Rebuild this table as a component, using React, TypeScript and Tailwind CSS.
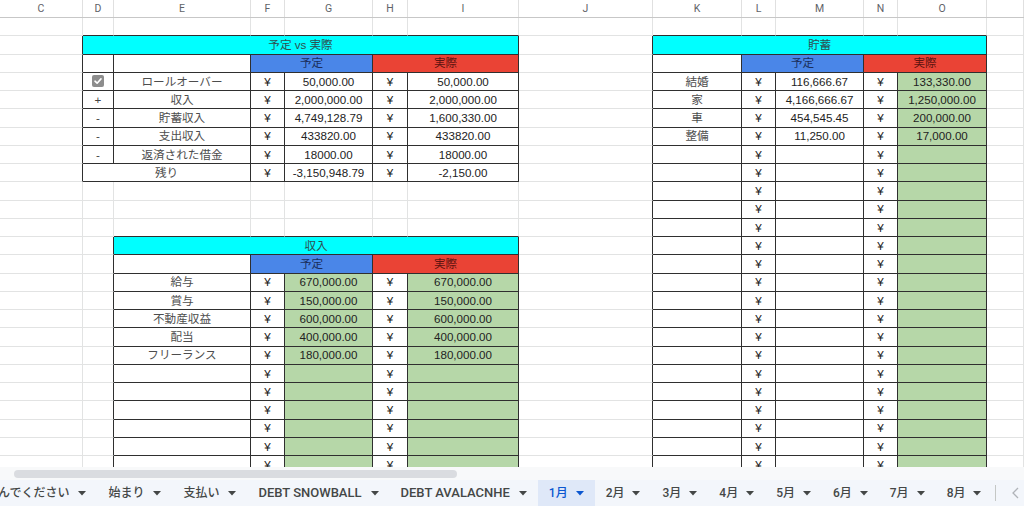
import React from "react";

type Kind = "cyan" | "blue" | "red" | "green" | "label" | "num" | "yen" | "sign" | "check" | "blank";
type Cell = { c: number; span?: number; text?: string; kind?: Kind; green?: boolean };

const COLS = ["C", "D", "E", "F", "G", "H", "I", "J", "K", "L", "M", "N", "O", ""];
const NROWS = 25;

const inT1 = (r: number, c: number) => r >= 2 && r <= 9 && c >= 1 && c <= 6;
const inT2 = (r: number, c: number) => r >= 2 && c >= 8 && c <= 12;
const inT3 = (r: number, c: number) => r >= 13 && c >= 2 && c <= 6;
const inT = (r: number, c: number) => inT1(r, c) || inT2(r, c) || inT3(r, c);

const t1Rows: [Kind, string, string, string, string][] = [
  ["check", "", "ロールオーバー", "50,000.00", "50,000.00"],
  ["sign", "+", "収入", "2,000,000.00", "2,000,000.00"],
  ["sign", "-", "貯蓄収入", "4,749,128.79", "1,600,330.00"],
  ["sign", "-", "支出収入", "433820.00", "433820.00"],
  ["sign", "-", "返済された借金", "18000.00", "18000.00"],
];

const t2Rows: [string, string, string][] = [
  ["結婚", "116,666.67", "133,330.00"],
  ["家", "4,166,666.67", "1,250,000.00"],
  ["車", "454,545.45", "200,000.00"],
  ["整備", "11,250.00", "17,000.00"],
];

const t3Rows: [string, string][] = [
  ["給与", "670,000.00"],
  ["賞与", "150,000.00"],
  ["不動産収益", "600,000.00"],
  ["配当", "400,000.00"],
  ["フリーランス", "180,000.00"],
];

function rowCells(r: number): Cell[] {
  const cells: Cell[] = [];
  if (r === 2) cells.push({ c: 1, span: 6, text: "予定 vs 実際", kind: "cyan" });
  else if (r === 3) {
    cells.push({ c: 1 }, { c: 2 }, { c: 3, span: 2, text: "予定", kind: "blue" }, { c: 5, span: 2, text: "実際", kind: "red" });
  } else if (r >= 4 && r <= 8) {
    const [k, s, label, a, b] = t1Rows[r - 4];
    cells.push(
      { c: 1, kind: k, text: s },
      { c: 2, kind: "label", text: label },
      { c: 3, kind: "yen", text: "¥" },
      { c: 4, kind: "num", text: a },
      { c: 5, kind: "yen", text: "¥" },
      { c: 6, kind: "num", text: b }
    );
  } else if (r === 9) {
    cells.push(
      { c: 1, span: 2, kind: "label", text: "残り" },
      { c: 3, kind: "yen", text: "¥" },
      { c: 4, kind: "num", text: "-3,150,948.79" },
      { c: 5, kind: "yen", text: "¥" },
      { c: 6, kind: "num", text: "-2,150.00" }
    );
  } else if (r === 13) cells.push({ c: 2, span: 5, text: "収入", kind: "cyan" });
  else if (r === 14) {
    cells.push({ c: 2 }, { c: 3, span: 2, text: "予定", kind: "blue" }, { c: 5, span: 2, text: "実際", kind: "red" });
  } else if (r >= 15) {
    const d = t3Rows[r - 15];
    cells.push(
      { c: 2, kind: "label", text: d ? d[0] : "" },
      { c: 3, kind: "yen", text: "¥" },
      { c: 4, kind: "num", text: d ? d[1] : "", green: true },
      { c: 5, kind: "yen", text: "¥" },
      { c: 6, kind: "num", text: d ? d[1] : "", green: true }
    );
  }
  if (r === 2) cells.push({ c: 8, span: 5, text: "貯蓄", kind: "cyan" });
  else if (r === 3) {
    cells.push({ c: 8 }, { c: 9, span: 2, text: "予定", kind: "blue" }, { c: 11, span: 2, text: "実際", kind: "red" });
  } else if (r >= 4) {
    const d = t2Rows[r - 4];
    cells.push(
      { c: 8, kind: "label", text: d ? d[0] : "" },
      { c: 9, kind: "yen", text: "¥" },
      { c: 10, kind: "num", text: d ? d[1] : "" },
      { c: 11, kind: "yen", text: "¥" },
      { c: 12, kind: "num", text: d ? d[2] : "", green: true }
    );
  }
  const out: Cell[] = [];
  let c = 0;
  const sorted = cells.sort((a, b) => a.c - b.c);
  let i = 0;
  while (c < COLS.length) {
    if (i < sorted.length && sorted[i].c === c) {
      out.push(sorted[i]);
      c += sorted[i].span ?? 1;
      i++;
    } else {
      out.push({ c, kind: "blank" });
      c++;
    }
  }
  return out;
}

const SPAN: Record<number, string> = { 1: "", 2: "col-span-2", 5: "col-span-5", 6: "col-span-6" };

const GRID =
  "grid grid-cols-[83px_31px_137px_34px_88px_35px_111px_134px_89px_34px_88px_34px_89px_1fr]";

function Check() {
  return (
    <div className="w-[12px] h-[12px] rounded-[2px] bg-[#8d8d8d] flex items-center justify-center">
      <svg width="10" height="10" viewBox="0 0 10 10">
        <path d="M2 5.2 L4.1 7.2 L8 2.9" fill="none" stroke="#fff" strokeWidth="1.6" strokeLinecap="round" strokeLinejoin="round" />
      </svg>
    </div>
  );
}

function CellView({ cell, r }: { cell: Cell; r: number }) {
  const span = cell.span ?? 1;
  const last = cell.c + span - 1;
  const darkR = inT(r, cell.c) || inT(r, last + 1);
  let darkB = false;
  for (let k = cell.c; k <= last; k++) if (inT(r, k) || inT(r + 1, k)) darkB = true;
  const rb = darkR ? "border-r-[#2f2f2f]" : "border-r-[#e2e3e3]";
  const bb = darkB ? "border-b-[#2f2f2f]" : "border-b-[#e2e3e3]";
  let bg = "bg-white";
  let txt = "text-[#222222]";
  switch (cell.kind) {
    case "cyan":
      bg = "bg-[#00ffff]";
      txt = "text-[#2d4f50]";
      break;
    case "blue":
      bg = "bg-[#4a86e8]";
      txt = "text-[#1b2f5c]";
      break;
    case "red":
      bg = "bg-[#ea4335]";
      txt = "text-[#5e1410]";
      break;
    case "label":
      txt = "text-[#4d4d4d]";
      break;
    case "sign":
      txt = "text-[#444444]";
      break;
  }
  if (cell.green) bg = "bg-[#b6d7a8]";
  return (
    <div
      className={`${SPAN[span]} border-r border-b ${rb} ${bb} ${bg} ${txt} flex items-center justify-center overflow-hidden whitespace-nowrap text-[11.6px] leading-none`}
    >
      {cell.kind === "check" ? <Check /> : cell.text}
    </div>
  );
}

function Sheet() {
  const rows = Array.from({ length: NROWS }, (_, i) => i + 1);
  return (
    <div className="flex-1 min-h-0 overflow-hidden bg-white">
      <div className={`${GRID} h-[18px] border-b border-b-[#c7c7c7] bg-white`}>
        {COLS.map((l, i) => (
          <div
            key={i}
            className="border-r border-r-[#e0e0e0] flex items-center justify-center text-[10.5px] text-[#5f6368] font-['Roboto',sans-serif]"
          >
            {l}
          </div>
        ))}
      </div>
      <div className={`${GRID} auto-rows-[18.25px]`}>
        {rows.map((r) =>
          rowCells(r).map((cell) => <CellView key={`${r}-${cell.c}`} cell={cell} r={r} />)
        )}
      </div>
    </div>
  );
}

function Caret({ active }: { active?: boolean }) {
  return (
    <svg width="8" height="5" viewBox="0 0 8 5" className="shrink-0">
      <path d="M0 0 L8 0 L4 4.5 Z" fill={active ? "#0b57d0" : "#444746"} />
    </svg>
  );
}

const TABS: { t: string; latin?: boolean; month?: boolean }[] = [
  { t: "選んでください" },
  { t: "始まり" },
  { t: "支払い" },
  { t: "DEBT SNOWBALL", latin: true },
  { t: "DEBT AVALACNHE", latin: true },
  { t: "1月", month: true },
  { t: "2月", month: true },
  { t: "3月", month: true },
  { t: "4月", month: true },
  { t: "5月", month: true },
  { t: "6月", month: true },
  { t: "7月", month: true },
  { t: "8月", month: true },
];

function TabBar() {
  return (
    <div className="h-[26px] shrink-0 bg-[#f3f6fb] flex items-center font-['Roboto','Noto_Sans_CJK_JP',sans-serif]">
      <div className="flex-1 min-w-0 h-full overflow-hidden">
        <div className="flex items-center h-full -ml-[25px] w-max">
          {TABS.map(({ t, latin, month }) => {
            const active = t === "1月";
            return (
              <div
                key={t}
                className={`h-full flex items-center px-[11px] font-medium whitespace-nowrap ${
                  month ? "gap-[8px]" : "gap-[9px]"
                } ${latin ? "text-[13px]" : "text-[12px]"} ${
                  active ? "bg-[#dfe8f8] text-[#0b57d0]" : "text-[#444746]"
                }`}
              >
                <span>{t}</span>
                <Caret active={active} />
              </div>
            );
          })}
        </div>
      </div>
      <div className="w-[29px] shrink-0 h-full flex items-center">
        <div className="w-px h-[16px] bg-[#c4c7c5]" />
        <div className="ml-[16px]">
          <svg width="7" height="12" viewBox="0 0 7 12">
            <path d="M6 1 L1 6 L6 11" fill="none" stroke="#b0b3b8" strokeWidth="1.3" />
          </svg>
        </div>
      </div>
    </div>
  );
}

export default function App() {
  return (
    <div className="w-[1024px] h-[506px] flex flex-col overflow-hidden bg-white font-['Liberation_Sans','Noto_Sans_CJK_JP',sans-serif]">
      <Sheet />
      <div className="h-[13px] shrink-0 bg-[#f8f9fa] flex items-center">
        <div className="ml-[14px] w-[443px] h-[8px] rounded-full bg-[#dadce0]" />
      </div>
      <TabBar />
    </div>
  );
}
